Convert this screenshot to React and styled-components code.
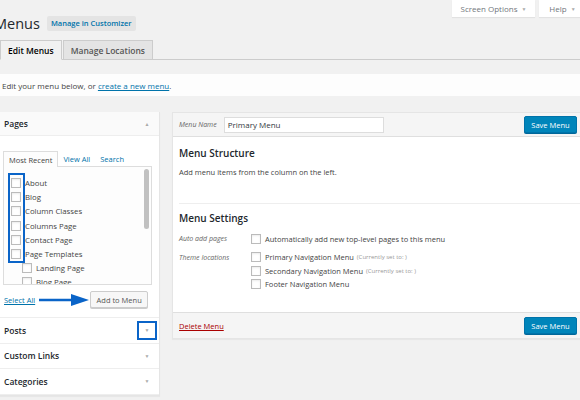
import React from 'react';
import styled, { createGlobalStyle } from 'styled-components';

const GlobalStyle = createGlobalStyle`
  html, body {
    margin: 0;
    padding: 0;
    background: #f1f1f1;
    font-family: 'Open Sans', 'Liberation Sans', sans-serif;
    color: #444;
  }
  * { box-sizing: border-box; }
`;

const pages = [
  { name: 'About' },
  { name: 'Blog' },
  { name: 'Column Classes' },
  { name: 'Columns Page' },
  { name: 'Contact Page' },
  { name: 'Page Templates' },
  { name: 'Landing Page', child: true },
  { name: 'Blog Page', child: true },
];

const closedSections = [
  { name: 'Posts', marked: true },
  { name: 'Custom Links' },
  { name: 'Categories' },
];

const locations = [
  { name: 'Primary Navigation Menu', note: '(Currently set to: )' },
  { name: 'Secondary Navigation Menu', note: '(Currently set to: )' },
  { name: 'Footer Navigation Menu' },
];

const App = () => {
  return (
    <>
      <GlobalStyle />
      <Page>
        <ScreenMeta>
          <MetaTab>Screen Options <Caret>▼</Caret></MetaTab>
          <MetaTab wide>Help <Caret>▼</Caret></MetaTab>
        </ScreenMeta>

        <TitleRow>
          <Title>Menus</Title>
          <TitleButton>Manage in Customizer</TitleButton>
        </TitleRow>

        <NavTabs>
          <NavTab active>Edit Menus</NavTab>
          <NavTab>Manage Locations</NavTab>
        </NavTabs>

        <Notice>
          Edit your menu below, or <Link>create a new menu</Link>.
        </Notice>

        <Columns>
          <Accordion>
            <SectionHead open>
              Pages
              <CaretBox>
                <Caret>▲</Caret>
              </CaretBox>
            </SectionHead>
            <SectionBody>
              <InnerTabs>
                <InnerTab active>Most Recent</InnerTab>
                <InnerTab>View All</InnerTab>
                <InnerTab>Search</InnerTab>
              </InnerTabs>
              <ListBox>
                <Highlight />
                <Scrollbar />
                {pages.map((p) => (
                  <ListItem key={p.name} child={p.child}>
                    <Check />
                    {p.name}
                  </ListItem>
                ))}
              </ListBox>
              <ActionRow>
                <SelectAll>Select All</SelectAll>
                <Arrow width="50" height="12" viewBox="0 0 50 12">
                  <line x1="0" y1="6" x2="36" y2="6" stroke="#0a64c8" strokeWidth="2.5" />
                  <polygon points="32,0 50,6 32,12" fill="#0a64c8" />
                </Arrow>
                <GreyButton>Add to Menu</GreyButton>
              </ActionRow>
            </SectionBody>
            {closedSections.map((s) => (
              <SectionHead key={s.name}>
                {s.name}
                <CaretBox marked={s.marked}>
                  <Caret>▼</Caret>
                </CaretBox>
              </SectionHead>
            ))}
          </Accordion>

          <MenuPanel>
            <PanelHeader>
              <FieldLabel>Menu Name</FieldLabel>
              <NameInput>Primary Menu</NameInput>
              <PrimaryButton>Save Menu</PrimaryButton>
            </PanelHeader>
            <PanelBody>
              <Heading>Menu Structure</Heading>
              <BodyText>Add menu items from the column on the left.</BodyText>
              <Divider />
              <Heading>Menu Settings</Heading>
              <SettingRow>
                <FieldLabel wide>Auto add pages</FieldLabel>
                <Options>
                  <Option>
                    <Check />
                    Automatically add new top-level pages to this menu
                  </Option>
                </Options>
              </SettingRow>
              <SettingRow>
                <FieldLabel wide>Theme locations</FieldLabel>
                <Options>
                  {locations.map((l) => (
                    <Option key={l.name}>
                      <Check />
                      {l.name}
                      {l.note && <Note>{l.note}</Note>}
                    </Option>
                  ))}
                </Options>
              </SettingRow>
            </PanelBody>
            <PanelFooter>
              <DeleteLink>Delete Menu</DeleteLink>
              <PrimaryButton>Save Menu</PrimaryButton>
            </PanelFooter>
          </MenuPanel>
        </Columns>
      </Page>
    </>
  );
};

const Page = styled.div`
  width: 580px;
  height: 400px;
  overflow: hidden;
`;

const ScreenMeta = styled.div`
  display: flex;
  justify-content: flex-end;
  gap: 4px;
  height: 17px;
  margin-right: -6px;
`;

const MetaTab = styled.div`
  display: flex;
  align-items: center;
  justify-content: center;
  gap: 4px;
  width: ${(props) => (props.wide ? '47px' : '83px')};
  height: 17px;
  background: #fff;
  box-shadow: 0 1px 1px rgba(0, 0, 0, 0.06);
  font-size: 8px;
  color: #72777c;
`;

const Caret = styled.span`
  font-size: 5px;
  color: #aaa;
`;

const TitleRow = styled.div`
  display: flex;
  align-items: center;
  gap: 7px;
  height: 24px;
  margin-top: -6px;
  margin-bottom: 5px;
`;

const Title = styled.h1`
  margin: 0 0 0 -6px;
  font-size: 14.5px;
  font-weight: 400;
  color: #23282d;
`;

const TitleButton = styled.span`
  display: flex;
  align-items: center;
  height: 15px;
  padding: 0 4px;
  background: #e4e4e4;
  border-radius: 2px;
  font-size: 7.5px;
  font-weight: 600;
  color: #0073aa;
`;

const NavTabs = styled.div`
  display: flex;
  gap: 1px;
  margin-top: 2px;
  padding-left: 0;
  border-bottom: 1px solid #ccc;
`;

const NavTab = styled.div`
  display: flex;
  align-items: center;
  height: 20px;
  margin-bottom: -1px;
  padding: 0 7px;
  border: 1px solid #ccc;
  border-bottom-color: ${(props) => (props.active ? '#f1f1f1' : '#ccc')};
  background: ${(props) => (props.active ? '#f1f1f1' : '#e4e4e4')};
  font-size: 8.5px;
  font-weight: 600;
  color: ${(props) => (props.active ? '#000' : '#555')};
`;

const Notice = styled.div`
  display: flex;
  align-items: center;
  height: 22px;
  margin-top: 14px;
  padding-left: 2px;
  background: #fdfdfd;
  font-size: 8px;
  color: #444;
  white-space: pre;
`;

const Link = styled.span`
  color: #0073aa;
  text-decoration: underline;
`;

const Columns = styled.div`
  display: flex;
  align-items: flex-start;
  gap: 12px;
  margin-top: 16px;
`;

const Accordion = styled.div`
  width: 160px;
  flex-shrink: 0;
  background: #fff;
  border-right: 1px solid #e5e5e5;
  border-bottom: 1px solid #e5e5e5;
  box-shadow: 0 1px 1px rgba(0, 0, 0, 0.04);
`;

const SectionHead = styled.div`
  display: flex;
  align-items: center;
  justify-content: space-between;
  height: ${(props) => (props.open ? '24px' : '25.5px')};
  padding: 0 2px 0 4px;
  border-bottom: 1px solid #eee;
  background: ${(props) => (props.open ? '#fafafa' : '#fff')};
  font-size: 8.5px;
  font-weight: 600;
  color: #23282d;
`;

const CaretBox = styled.span`
  display: flex;
  align-items: center;
  justify-content: center;
  width: 20px;
  height: 19px;
  border: 2.5px solid ${(props) => (props.marked ? '#0a64c8' : 'transparent')};
`;

const SectionBody = styled.div`
  padding: 15px 7px 9px 3px;
  border-bottom: 1px solid #eee;
`;

const InnerTabs = styled.div`
  display: flex;
  align-items: flex-end;
  height: 15px;
`;

const InnerTab = styled.div`
  display: flex;
  align-items: center;
  height: ${(props) => (props.active ? '16px' : '15px')};
  margin-bottom: ${(props) => (props.active ? '-1px' : '0')};
  padding: 0 ${(props) => (props.active ? '5px' : '4px')};
  border: 1px solid ${(props) => (props.active ? '#ddd' : 'transparent')};
  border-bottom: none;
  background: ${(props) => (props.active ? '#fdfdfd' : 'transparent')};
  font-size: 7.5px;
  color: ${(props) => (props.active ? '#444' : '#0073aa')};
  position: relative;
  z-index: 1;
`;

const ListBox = styled.div`
  position: relative;
  height: 119px;
  overflow: hidden;
  padding: 9px 0 0 7px;
  border: 1px solid #ddd;
  background: #fdfdfd;
`;

const Highlight = styled.div`
  position: absolute;
  left: 4px;
  top: 6px;
  width: 17px;
  height: 90px;
  border: 2.5px solid #0a64c8;
  z-index: 2;
`;

const Scrollbar = styled.div`
  position: absolute;
  right: 2px;
  top: 2px;
  width: 5px;
  height: 60px;
  border-radius: 3px;
  background: #c1c1c1;
`;

const Check = styled.span`
  display: inline-block;
  flex-shrink: 0;
  width: 10px;
  height: 10px;
  margin-right: 4px;
  border: 1px solid #bbb;
  background: #fff;
  box-shadow: inset 0 1px 2px rgba(0, 0, 0, 0.08);
`;

const ListItem = styled.div`
  display: flex;
  align-items: center;
  height: 14.2px;
  padding-left: ${(props) => (props.child ? '11px' : '0')};
  font-size: 7.8px;
  color: #444;
`;

const ActionRow = styled.div`
  display: flex;
  align-items: center;
  margin-top: 6px;
  padding-left: 1px;
`;

const SelectAll = styled.span`
  font-size: 7.5px;
  color: #0073aa;
  text-decoration: underline;
`;

const Arrow = styled.svg`
  margin-left: 4px;
  display: block;
`;

const GreyButton = styled.span`
  display: flex;
  align-items: center;
  justify-content: center;
  width: 58px;
  height: 17px;
  margin-left: 1px;
  border: 1px solid #ccc;
  border-radius: 2px;
  background: #f7f7f7;
  box-shadow: 0 1px 0 #ccc;
  font-size: 7.5px;
  color: #555;
`;

const MenuPanel = styled.div`
  flex: 1;
  margin-right: -4px;
  border: 1px solid #e5e5e5;
  background: #fff;
  box-shadow: 0 1px 1px rgba(0, 0, 0, 0.04);
`;

const PanelHeader = styled.div`
  display: flex;
  align-items: center;
  height: 24px;
  padding: 0 6px;
  background: #f5f5f5;
  border-bottom: 1px solid #dfdfdf;
`;

const FieldLabel = styled.span`
  width: ${(props) => (props.wide ? '72px' : 'auto')};
  flex-shrink: 0;
  font-size: 7px;
  font-style: italic;
  color: #666;
  line-height: 13px;
`;

const NameInput = styled.div`
  display: flex;
  align-items: center;
  width: 160px;
  height: 16px;
  margin-left: 7px;
  padding-left: 3px;
  border: 1px solid #ddd;
  background: #fff;
  font-size: 8px;
  color: #32373c;
`;

const PrimaryButton = styled.span`
  display: flex;
  align-items: center;
  justify-content: center;
  width: 53px;
  height: 17px;
  margin-left: auto;
  border: 1px solid #0073aa;
  border-radius: 2px;
  background: #0085ba;
  box-shadow: 0 1px 0 #006799;
  font-size: 7.5px;
  color: #fff;
`;

const PanelBody = styled.div`
  height: 175px;
  padding: 9px 0 0 6px;
`;

const Heading = styled.h3`
  margin: 0;
  font-size: 10px;
  font-weight: 600;
  color: #23282d;
  line-height: 15px;
`;

const BodyText = styled.p`
  margin: 5px 0 0;
  font-size: 7.5px;
  color: #444;
  line-height: 12px;
`;

const Divider = styled.div`
  height: 1px;
  margin: 25px 0 7px;
  background: #eee;
`;

const SettingRow = styled.div`
  display: flex;
  align-items: flex-start;
  margin-top: 6px;
  & + & {
    margin-top: 5px;
  }
`;

const Options = styled.div`
  display: flex;
  flex-direction: column;
`;

const Option = styled.div`
  display: flex;
  align-items: center;
  height: 13.5px;
  font-size: 7.5px;
  color: #444;
`;

const Note = styled.span`
  margin-left: 3px;
  font-size: 6px;
  color: #999;
`;

const PanelFooter = styled.div`
  display: flex;
  align-items: center;
  height: 26px;
  padding: 0 6px;
  background: #f5f5f5;
  border-top: 1px solid #dfdfdf;
`;

const DeleteLink = styled.span`
  font-size: 7.5px;
  color: #a00;
  text-decoration: underline;
`;

export default App;
